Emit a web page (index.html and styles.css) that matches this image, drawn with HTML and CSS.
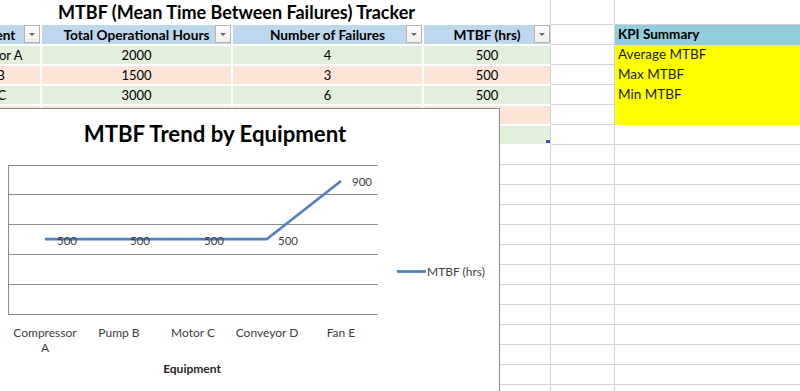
FILE: index.html
```html
<!DOCTYPE html>
<html lang="en">
<head>
  <meta charset="UTF-8">
  <meta name="viewport" content="width=device-width, initial-scale=1.0">
  <title>MTBF Tracker</title>
  <link rel="stylesheet" href="styles.css">
</head>
<body>
  <div class="sheet">
    <div class="row row-title">
      <div class="cell span-ad title">MTBF (Mean Time Between Failures) Tracker</div>
      <div class="cell c-f"></div>
      <div class="cell c-g"></div>
    </div>

    <div class="row">
      <div class="cell c-a th">Equipment<span class="filter"></span></div>
      <div class="cell c-b th">Total Operational Hours<span class="filter"></span></div>
      <div class="cell c-c th">Number of Failures<span class="filter"></span></div>
      <div class="cell c-d th">MTBF (hrs)<span class="filter"></span></div>
      <div class="cell c-f"></div>
      <div class="cell c-g kpi-head">KPI Summary</div>
    </div>

    <div class="row green">
      <div class="cell c-a td">Compressor A</div>
      <div class="cell c-b td">2000</div>
      <div class="cell c-c td">4</div>
      <div class="cell c-d td">500</div>
      <div class="cell c-f"></div>
      <div class="cell c-g kpi">Average MTBF</div>
    </div>
    <div class="row peach">
      <div class="cell c-a td">Pump B</div>
      <div class="cell c-b td">1500</div>
      <div class="cell c-c td">3</div>
      <div class="cell c-d td">500</div>
      <div class="cell c-f"></div>
      <div class="cell c-g kpi">Max MTBF</div>
    </div>
    <div class="row green">
      <div class="cell c-a td">Motor C</div>
      <div class="cell c-b td">3000</div>
      <div class="cell c-c td">6</div>
      <div class="cell c-d td">500</div>
      <div class="cell c-f"></div>
      <div class="cell c-g kpi">Min MTBF</div>
    </div>
    <!-- rows 4 and 5 sit under the chart -->
    <div class="row peach">
      <div class="cell c-a td"></div>
      <div class="cell c-b td"></div>
      <div class="cell c-c td"></div>
      <div class="cell c-d td"></div>
      <div class="cell c-f"></div>
      <div class="cell c-g kpi"></div>
    </div>
    <div class="row green">
      <div class="cell c-a td"></div>
      <div class="cell c-b td"></div>
      <div class="cell c-c td"></div>
      <div class="cell c-d td last"></div>
      <div class="cell c-f"></div>
      <div class="cell c-g"></div>
    </div>

    <div class="row"><div class="cell c-a"></div><div class="cell c-b"></div><div class="cell c-c"></div><div class="cell c-d"></div><div class="cell c-f"></div><div class="cell c-g"></div></div>
    <div class="row"><div class="cell c-a"></div><div class="cell c-b"></div><div class="cell c-c"></div><div class="cell c-d"></div><div class="cell c-f"></div><div class="cell c-g"></div></div>
    <div class="row"><div class="cell c-a"></div><div class="cell c-b"></div><div class="cell c-c"></div><div class="cell c-d"></div><div class="cell c-f"></div><div class="cell c-g"></div></div>
    <div class="row"><div class="cell c-a"></div><div class="cell c-b"></div><div class="cell c-c"></div><div class="cell c-d"></div><div class="cell c-f"></div><div class="cell c-g"></div></div>
    <div class="row"><div class="cell c-a"></div><div class="cell c-b"></div><div class="cell c-c"></div><div class="cell c-d"></div><div class="cell c-f"></div><div class="cell c-g"></div></div>
    <div class="row"><div class="cell c-a"></div><div class="cell c-b"></div><div class="cell c-c"></div><div class="cell c-d"></div><div class="cell c-f"></div><div class="cell c-g"></div></div>
    <div class="row"><div class="cell c-a"></div><div class="cell c-b"></div><div class="cell c-c"></div><div class="cell c-d"></div><div class="cell c-f"></div><div class="cell c-g"></div></div>
    <div class="row"><div class="cell c-a"></div><div class="cell c-b"></div><div class="cell c-c"></div><div class="cell c-d"></div><div class="cell c-f"></div><div class="cell c-g"></div></div>
    <div class="row"><div class="cell c-a"></div><div class="cell c-b"></div><div class="cell c-c"></div><div class="cell c-d"></div><div class="cell c-f"></div><div class="cell c-g"></div></div>
    <div class="row"><div class="cell c-a"></div><div class="cell c-b"></div><div class="cell c-c"></div><div class="cell c-d"></div><div class="cell c-f"></div><div class="cell c-g"></div></div>
    <div class="row"><div class="cell c-a"></div><div class="cell c-b"></div><div class="cell c-c"></div><div class="cell c-d"></div><div class="cell c-f"></div><div class="cell c-g"></div></div>
    <div class="row"><div class="cell c-a"></div><div class="cell c-b"></div><div class="cell c-c"></div><div class="cell c-d"></div><div class="cell c-f"></div><div class="cell c-g"></div></div>
    <div class="row"><div class="cell c-a"></div><div class="cell c-b"></div><div class="cell c-c"></div><div class="cell c-d"></div><div class="cell c-f"></div><div class="cell c-g"></div></div>

    <!-- floating chart object -->
    <div class="chart">
      <div class="chart-title">MTBF Trend by Equipment</div>
      <svg class="plot" width="568" height="250" viewBox="-69 148 568 250">
        <g class="grid">
          <line x1="8" y1="165.5" x2="378" y2="165.5"/>
          <line x1="8" y1="194.5" x2="378" y2="194.5"/>
          <line x1="8" y1="224.5" x2="378" y2="224.5"/>
          <line x1="8" y1="254.5" x2="378" y2="254.5"/>
          <line x1="8" y1="284.5" x2="378" y2="284.5"/>
          <line x1="8" y1="314.5" x2="378" y2="314.5"/>
          <line x1="8.5" y1="165" x2="8.5" y2="315"/>
        </g>
        <polyline class="series" points="45,239 119,239 193,239 267,239 341,181"/>
        <text class="dlabel" x="57" y="245">500</text>
        <text class="dlabel" x="130" y="245">500</text>
        <text class="dlabel" x="204" y="245">500</text>
        <text class="dlabel" x="278" y="245">500</text>
        <text class="dlabel" x="352" y="186">900</text>

        <text class="cat" x="45" y="337">Compressor</text>
        <text class="cat" x="45" y="352">A</text>
        <text class="cat" x="119" y="337">Pump B</text>
        <text class="cat" x="193" y="337">Motor C</text>
        <text class="cat" x="267" y="337">Conveyor D</text>
        <text class="cat" x="341" y="337">Fan E</text>
        <text class="axis-title" x="192" y="373">Equipment</text>

        <line class="series" x1="397" y1="271.5" x2="426" y2="271.5"/>
        <text class="legend" x="427" y="276">MTBF (hrs)</text>
      </svg>
    </div>
  </div>
</body>
</html>
```

FILE: styles.css
```css
html, body {
  margin: 0;
  overflow: hidden;
  background-color: #fff;
}

body {
  font-family: Lato, "Open Sans", sans-serif;
  font-size: 13px;
  color: #000;
}

.sheet {
  position: relative;
  margin-left: -75px;
}

.row {
  display: flex;
  height: 20px;
}

.row-title {
  height: 25px;
}

.cell {
  flex: none;
  box-sizing: border-box;
  height: 100%;
  border-right: 1px solid #d4d4d4;
  border-bottom: 1px solid #d4d4d4;
}

.c-a { width: 117px; }
.c-b { width: 191px; }
.c-c { width: 191px; }
.c-d { width: 127px; }
.c-f { width: 64px; }
.c-g { width: 260px; border-right: none; }

.span-ad {
  width: 626px;
}

.title {
  font-size: 18px;
  font-weight: bold;
  line-height: 24px;
  text-align: center;
  padding-right: 2px;
  border-bottom-color: #fff;
}

/* table header */
.th {
  position: relative;
  background-color: #bdd7ee;
  font-size: 13.7px;
  font-weight: bold;
  text-align: center;
  line-height: 19px;
  border-bottom-color: #fff;
  border-right: 2px solid #fff;
  white-space: nowrap;
}

.th.c-d {
  border-right: 1px solid #d4d4d4;
}

.filter {
  position: absolute;
  right: 0;
  top: 0;
  width: 16px;
  height: 18px;
  box-sizing: border-box;
  border: 1px solid #b4b4b4;
  background: linear-gradient(#fefefe, #eeeeee);
}

.filter::after {
  content: "";
  position: absolute;
  left: 4px;
  top: 7px;
  border-left: 3px solid transparent;
  border-right: 3px solid transparent;
  border-top: 3px solid #6b6b6b;
}

/* table body */
.td {
  text-align: center;
  line-height: 18px;
  border-top: 1px solid #fff;
  border-bottom-color: #fff;
  border-right: 2px solid #fff;
  white-space: nowrap;
}

.td.c-d {
  position: relative;
  border-right: 1px solid #d4d4d4;
}

.green .td { background-color: #e2efda; }
.peach .td { background-color: #fce4d6; }

.td.last::after {
  content: "";
  position: absolute;
  right: 0;
  bottom: 1px;
  width: 4px;
  height: 3px;
  background-color: #3f55b5;
}

/* KPI block */
.kpi-head {
  background-color: #92cddc;
  border-bottom-color: #92cddc;
  font-size: 13.5px;
  font-weight: bold;
  line-height: 19px;
  padding-left: 3px;
}

.kpi {
  background-color: #ffff00;
  border-bottom-color: #ffff00;
  font-size: 13.5px;
  line-height: 19px;
  padding-left: 3px;
  color: #1a1a1a;
}

/* chart */
.chart {
  position: absolute;
  left: 5px;
  top: 108px;
  width: 568px;
  height: 300px;
  border: 1px solid #868686;
  background-color: #fff;
}

.chart-title {
  padding-top: 10px;
  font-size: 22.2px;
  font-weight: bold;
  line-height: 29px;
  text-align: center;
}

.plot {
  display: block;
}

.grid line {
  stroke: #8c8c8c;
  stroke-width: 1;
}

.series {
  fill: none;
  stroke: #4f81bd;
  stroke-width: 2.75;
  stroke-linejoin: round;
}

.dlabel, .cat, .legend, .axis-title {
  font-family: Lato, "Open Sans", sans-serif;
  font-size: 11.5px;
  fill: #404040;
}

.cat, .axis-title {
  text-anchor: middle;
  font-size: 12px;
}

.axis-title {
  font-weight: bold;
  fill: #262626;
}

.legend {
  font-size: 12px;
}
```
